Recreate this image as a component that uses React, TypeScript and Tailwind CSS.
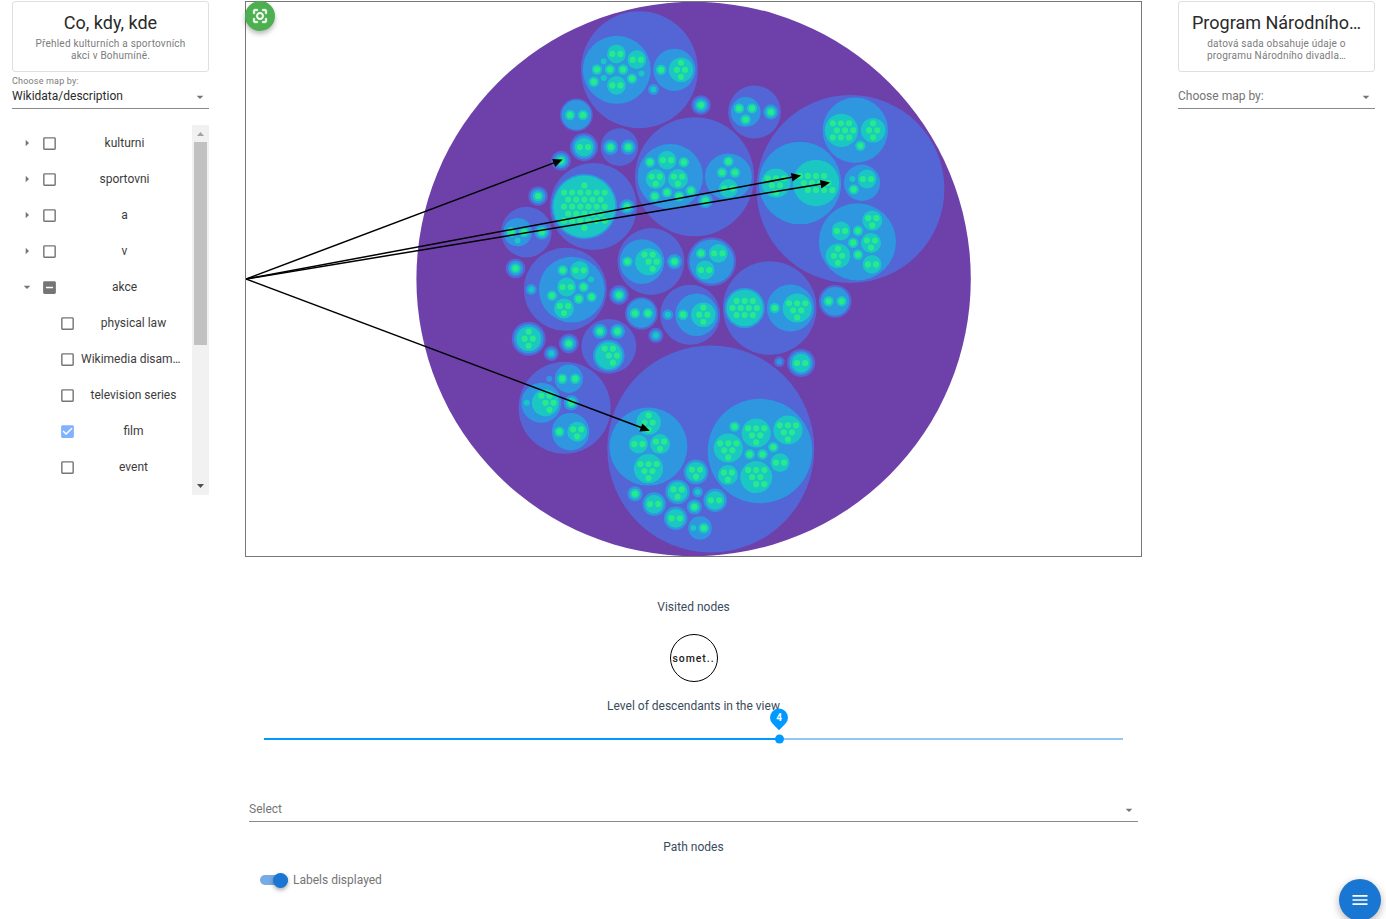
import React from "react";

const COLORS = ["#6e40aa", "#5465d6", "#2f96e0", "#1ac7c2", "#28ea8d"];

type Circle = { level: number; x: number; y: number; r: number };
type Point = [number, number];

const row = (y: number, from: number, count: number): Point[] =>
  Array.from({ length: count }, (_, i) => [from + i * 8.13, y] as Point);

const CLUSTERS: Record<string, { r: number; dots: Point[] }> = {
  n1: { r: 5.2, dots: [[0, 0]] },
  n2: { r: 9.4, dots: row(0, -4.07, 2) },
  n3: { r: 10, dots: [...row(-2.4, -4.07, 2), [0, 4.7]] },
  n4: { r: 12.3, dots: [[0, -7.05], ...row(0, -4.07, 2), [0, 7.05]] },
  n5: { r: 13.5, dots: [...row(-7.05, -4.07, 2), ...row(0, 0, 2), [4.07, 7.05]] },
  n6: { r: 14.6, dots: [...row(-4.7, -8.13, 3), ...row(2.35, -4.07, 2), [0, 9.4]] },
  n7: { r: 16, dots: [...row(-7.05, -8.13, 3), ...row(0, -4.07, 2), ...row(7.05, 0, 2)] },
  n9: { r: 16.6, dots: [...row(-7.05, -8.6, 3), ...row(0, -4.5, 3), ...row(7.05, -8.6, 3)] },
  n10: { r: 18.3, dots: [...row(-7.05, -8.13, 3), ...row(0, -12.2, 4), ...row(7.05, -8.13, 3)] },
  n12: { r: 23.2, dots: [...row(-7.05, -16.27, 4), ...row(0, -12.2, 4), ...row(7.05, -8.13, 4)] },
  n30: {
    r: 31,
    dots: [
      [0, -21.2],
      ...row(-14.1, -20.33, 6),
      ...row(-7.05, -16.27, 5),
      ...row(0, -20.33, 6),
      ...row(7.05, -16.27, 5),
      ...row(14.1, -20.33, 6),
      [0, 21.2],
    ],
  },
};

// [level, x, y, r]
const GROUPS: [number, number, number, number][] = [
  [0, 693.6, 279, 277.2],
  [1, 639.4, 69.8, 58.5], [2, 616.8, 69.8, 34], [2, 674.4, 69.8, 21.1], [2, 653.4, 89.4, 5.4],
  [1, 576.4, 115, 16.4], [2, 576.4, 115, 14.9], [1, 619.5, 147.1, 18.8],
  [1, 694.5, 176.7, 59.5], [2, 670.3, 176.6, 32.7], [2, 728.4, 176.8, 23.4],
  [1, 593.4, 206.6, 43.5], [2, 584.4, 206.6, 32.7],
  [1, 526.4, 232.1, 25.3], [2, 517.7, 232.1, 14.2],
  [1, 565.3, 289.3, 41.5], [2, 571.8, 289.6, 32.9], [2, 531.3, 289.4, 5.4],
  [1, 651, 261.5, 33.4], [2, 642, 261.6, 22.3],
  [1, 711.7, 261.6, 24.4], [2, 711.7, 261.6, 22.2],
  [1, 641.4, 313.3, 16.4], [2, 641.4, 313.3, 14.5],
  [1, 690.2, 314.7, 30], [2, 696.6, 314.7, 21.3], [2, 667.8, 314.7, 5.4],
  [1, 655.8, 335.4, 7.6], [2, 655.8, 335.4, 5.4],
  [1, 769.7, 308, 46.8], [2, 744.7, 308, 20.2], [2, 790.5, 308, 23.6],
  [1, 835.1, 301.3, 16.4], [2, 835.1, 301.3, 14.3],
  [1, 779.3, 361.7, 5.4], [2, 779.3, 361.7, 3],
  [1, 528.7, 338.7, 17], [2, 528.7, 338.7, 14.8],
  [1, 551.3, 353.4, 7.6], [2, 551.3, 353.4, 5.4],
  [1, 608.8, 346.3, 27.4], [2, 608.8, 355.6, 15.8],
  [1, 564.6, 407.8, 46], [2, 549.3, 378.7, 3], [2, 568.8, 378.7, 14.2], [2, 541.3, 402.8, 20], [2, 570.6, 431.7, 18.8],
  [1, 710.8, 449, 103.5], [2, 648.4, 446.6, 39], [2, 760, 451, 52.3],
  [2, 697.7, 492, 5.4], [2, 700, 528, 11.8],
  [1, 754.5, 112, 26.4], [2, 745.7, 112, 15],
  [1, 850.4, 189, 94], [2, 800, 183, 41.3], [2, 855.3, 130.3, 32.7], [2, 862, 182.8, 18.2], [2, 857.4, 241.8, 38.6],
];

// Level 3 nodes without children
const TEAL_LEAVES: Point[] = [
  [603.7, 61.2], [603.7, 78], [641.4, 73.4], [653.4, 89.4], [517.6, 240.4], [591, 279.4], [531.3, 289.4],
  [667.8, 314.7], [655.8, 335.4], [551.3, 353.4], [526.7, 402.7], [697.7, 492], [693.4, 528], [852.4, 179],
];

// [cluster, x, y, outermost level drawn around the cluster]
const NODES: [string, number, number, number][] = [
  ["n2", 616.4, 53.9, 3], ["n2", 636.8, 59.7, 3], ["n2", 616.4, 85.4, 3],
  ["n1", 596.9, 69.5, 3], ["n1", 610, 69.5, 3], ["n1", 623, 69.5, 3], ["n1", 593.8, 81.8, 3], ["n1", 632, 78.6, 3],
  ["n1", 661, 69.8, 3], ["n4", 681, 69.8, 3],
  ["n1", 701, 105.1, 1], ["n1", 570, 115, 3], ["n1", 583, 115, 3], ["n2", 584, 147.1, 1],
  ["n1", 610.6, 147.1, 2], ["n1", 628.3, 147.1, 2], ["n1", 561, 160.7, 1],
  ["n2", 667, 160.2, 3], ["n3", 655.7, 179, 3], ["n3", 678, 179, 3],
  ["n1", 650, 162.2, 3], ["n1", 683.8, 162.2, 3], ["n1", 654.7, 196.2, 3], ["n1", 667, 192.4, 3], ["n1", 679.1, 196.2, 3], ["n1", 690.8, 190.7, 3],
  ["n1", 728.4, 161.4, 3], ["n1", 722, 172.5, 3], ["n1", 735, 172.5, 3], ["n2", 728.4, 188.4, 3],
  ["n1", 705.4, 200.7, 2], ["n30", 584.4, 206.6, 3], ["n1", 627, 206.7, 2], ["n1", 538.1, 196.1, 1],
  ["n1", 511.2, 232, 3], ["n1", 524.1, 232, 3], ["n1", 541.9, 232, 2], ["n1", 515.5, 268.4, 1],
  ["n2", 579.6, 270.3, 3], ["n2", 566.6, 287, 3], ["n3", 564, 308.4, 3],
  ["n1", 562.7, 270.3, 3], ["n1", 583.6, 287, 3], ["n1", 552, 295.6, 3], ["n1", 578.7, 298.8, 3], ["n1", 591.6, 296.9, 3],
  ["n1", 627.4, 261.6, 3], ["n5", 648.6, 261.7, 3], ["n1", 674.4, 261.6, 2],
  ["n1", 701, 253.4, 3], ["n2", 718.3, 253.4, 3], ["n2", 705.1, 270, 3], ["n1", 619, 295, 1],
  ["n1", 634.9, 313.3, 3], ["n1", 647.9, 313.3, 3], ["n1", 683.1, 314.7, 3], ["n4", 703.3, 314.7, 3],
  ["n10", 744.7, 308, 3], ["n1", 774.7, 308, 3], ["n6", 797.2, 308, 3],
  ["n1", 828.6, 301.3, 3], ["n1", 841.6, 301.3, 3], ["n2", 801.1, 363, 1],
  ["n4", 528.7, 338.7, 3], ["n1", 568.8, 343.5, 1], ["n1", 600, 331.3, 2], ["n1", 617.5, 331.3, 2], ["n5", 608.8, 355.6, 3],
  ["n1", 562.2, 378.7, 3], ["n1", 575.2, 378.7, 3], ["n5", 545.4, 402.8, 3], ["n1", 571.3, 402.8, 2],
  ["n1", 559.4, 431.7, 3], ["n3", 577.2, 431.7, 3],
  ["n4", 648.6, 422.5, 3], ["n2", 638.4, 444.2, 3], ["n3", 660.1, 444.1, 3], ["n6", 648.5, 468.7, 3],
  ["n1", 734.5, 426.6, 3], ["n6", 756.2, 433, 3], ["n6", 787.9, 430, 3], ["n6", 728.3, 448, 3],
  ["n1", 749.7, 454.3, 3], ["n1", 762.5, 454.3, 3], ["n1", 773.3, 447.1, 3], ["n2", 780, 462.7, 3], ["n3", 727.9, 475, 3], ["n7", 756.2, 477.1, 3],
  ["n3", 696, 471.9, 2], ["n1", 635, 493.8, 2], ["n3", 677.6, 491.8, 2], ["n2", 654.2, 504.1, 2],
  ["n1", 694.4, 506.8, 2], ["n2", 715.1, 500.3, 2], ["n2", 675.7, 518.3, 2], ["n1", 703.8, 528, 3],
  ["n1", 739.1, 108.4, 3], ["n1", 752, 108.4, 3], ["n1", 745.6, 119.5, 3], ["n1", 770.8, 112, 2],
  ["n6", 776, 183, 3], ["n12", 816, 183, 3], ["n9", 841.4, 130.3, 3], ["n4", 873.1, 130.3, 3], ["n1", 860.4, 145.8, 3],
  ["n2", 867, 179, 3], ["n1", 853.7, 189.4, 3],
  ["n3", 872.3, 220.6, 3], ["n2", 841, 230.9, 3], ["n1", 858, 230.8, 3], ["n1", 853.1, 242.7, 3], ["n3", 871, 242.9, 3],
  ["n4", 838, 255.8, 3], ["n1", 858, 254.7, 3], ["n2", 872, 264.4, 3],
];

const circles: Circle[] = [
  ...GROUPS.map(([level, x, y, r]) => ({ level, x, y, r })),
  ...TEAL_LEAVES.map(([x, y]) => ({ level: 3, x, y, r: 3 })),
  ...NODES.flatMap(([kind, x, y, outer]) => {
    const { r, dots } = CLUSTERS[kind];
    const shells: Circle[] = [];
    for (let level = outer; level <= 3; level++) {
      shells.push({ level, x, y, r: r + (3 - level) * 2.35 });
    }
    return [...shells, ...dots.map(([dx, dy]) => ({ level: 4, x: x + dx, y: y + dy, r: 3.1 }))];
  }),
];

const ARROWS: Point[] = [[562.6, 159.6], [801, 175.6], [830, 182.6], [649.8, 430.8]];

function Arrow({ tip: [x, y] }: { tip: Point }) {
  const angle = (Math.atan2(y - 279, x - 246) * 180) / Math.PI;
  return (
    <g>
      <line x1={246} y1={279} x2={x - 4} y2={y - 4 * Math.tan((angle * Math.PI) / 180)} stroke="#000" strokeWidth={1.5} />
      <path d="M0 0 L-9.5 -4.3 L-9.5 4.3 Z" transform={`translate(${x} ${y}) rotate(${angle})`} />
    </g>
  );
}

function Caret({ right = false, className = "" }: { right?: boolean; className?: string }) {
  return (
    <svg viewBox="0 0 24 24" className={`h-4 w-4 shrink-0 text-[#757575] ${className}`} fill="currentColor">
      <path d={right ? "M10 17l5-5-5-5v10z" : "M7 10l5 5 5-5z"} />
    </svg>
  );
}

const BOX_PATHS = {
  off: "M19 3H5c-1.1 0-2 .9-2 2v14c0 1.1.9 2 2 2h14c1.1 0 2-.9 2-2V5c0-1.1-.9-2-2-2zm0 16H5V5h14v14z",
  some: "M19 3H5c-1.1 0-2 .9-2 2v14c0 1.1.9 2 2 2h14c1.1 0 2-.9 2-2V5c0-1.1-.9-2-2-2zm-2 10H7v-2h10v2z",
  on: "M19 3H5c-1.1 0-2 .9-2 2v14c0 1.1.9 2 2 2h14c1.1 0 2-.9 2-2V5c0-1.1-.9-2-2-2zm-9 14l-5-5 1.41-1.41L10 14.17l7.59-7.59L19 8l-9 9z",
};

type TreeRow = { label: string; state: keyof typeof BOX_PATHS; child?: boolean; open?: boolean };

const TREE: TreeRow[] = [
  { label: "kulturni", state: "off" },
  { label: "sportovni", state: "off" },
  { label: "a", state: "off" },
  { label: "v", state: "off" },
  { label: "akce", state: "some", open: true },
  { label: "physical law", state: "off", child: true },
  { label: "Wikimedia disam…", state: "off", child: true },
  { label: "television series", state: "off", child: true },
  { label: "film", state: "on", child: true },
  { label: "event", state: "off", child: true },
];

function TreeItem({ label, state, child, open }: TreeRow) {
  const clipped = label.endsWith("…");
  return (
    <div className={`flex h-9 items-center pr-[6px] ${child ? "pl-[47px]" : "pl-[7px]"}`}>
      {!child && <Caret right={!open} />}
      <svg
        viewBox="0 0 24 24"
        className={`mt-px h-[17px] w-[17px] shrink-0 ${child ? "" : "ml-[6px]"} ${state === "on" ? "text-[#82b1ff]" : "text-[#757575]"}`}
        fill="currentColor"
      >
        <path d={BOX_PATHS[state]} />
      </svg>
      <span className={`ml-[5px] min-w-0 flex-1 whitespace-nowrap text-[12px] text-[#3c3c3c] ${clipped ? "text-left" : "text-center"}`}>
        {label}
      </span>
    </div>
  );
}

function DatasetCard({ title, lines }: { title: string; lines: string[] }) {
  return (
    <div className="h-[71px] rounded-[3px] border border-[#dfdfdf] pt-[9px] text-center">
      <h2 className="text-[18px] leading-6 text-[#2a2a2a]">{title}</h2>
      <div className="mt-[3px] text-[10px] leading-3 tracking-[0.22px] text-[#7c7c7c]">
        {lines.map((line) => (
          <p key={line}>{line}</p>
        ))}
      </div>
    </div>
  );
}

export default function App() {
  return (
    <div
      className="relative h-[919px] w-[1386px] overflow-hidden bg-white text-[#333]"
      style={{ fontFamily: 'Roboto, "Liberation Sans", sans-serif' }}
    >
      <div className="flex items-start pt-px">
        <aside className="ml-3 w-[197px]">
          <DatasetCard title="Co, kdy, kde" lines={["Přehled kulturních a sportovních", "akci v Bohumíně."]} />
          <div className="flex h-[37px] flex-col border-b border-[#8a8a8a] pt-[3px]">
            <span className="text-[9px] leading-3 tracking-[0.18px] text-[#7c7c7c]">Choose map by:</span>
            <div className="flex h-[18px] items-center justify-between text-[12px] text-[#2a2a2a]">
              <span>Wikidata/description</span>
              <Caret className="mr-px mt-px" />
            </div>
          </div>
          <div className="mt-4 flex h-[370px]">
            <div className="w-[180px] overflow-hidden">
              {TREE.map((item) => (
                <TreeItem key={item.label} {...item} />
              ))}
            </div>
            <div className="flex w-[17px] flex-col items-center bg-[#f1f1f1]">
              <div className="flex h-[17px] items-center">
                <svg className="h-1 w-[7px]" viewBox="0 0 7 4"><path d="M0 4L3.5 0L7 4Z" fill="#a3a3a3" /></svg>
              </div>
              <div className="h-[203px] w-[13px] bg-[#c1c1c1]" />
              <div className="mt-auto flex h-[17px] items-center pb-[2px]">
                <svg className="h-1 w-[7px]" viewBox="0 0 7 4"><path d="M0 0L3.5 4L7 0Z" fill="#505050" /></svg>
              </div>
            </div>
          </div>
        </aside>

        <main className="ml-9 flex w-[897px] flex-col">
          <div className="relative h-[556px] border border-[#777]">
            <svg viewBox="246 2 895 554" className="h-[554px] w-[895px]">
              {circles.map((c, i) => (
                <circle key={i} cx={c.x} cy={c.y} r={c.r} fill={COLORS[c.level]} />
              ))}
              {ARROWS.map((tip) => (
                <Arrow key={tip[0]} tip={tip} />
              ))}
            </svg>
            <button className="absolute -left-px -top-px flex h-[30px] w-[30px] items-center justify-center rounded-full bg-[#4caf50] text-white shadow-[0_3px_5px_rgba(0,0,0,0.28)]">
              <svg viewBox="0 0 24 24" className="h-[18px] w-[18px]" fill="currentColor" stroke="currentColor" strokeWidth={0.7}>
                <path d="M5 15H3v4c0 1.1.9 2 2 2h4v-2H5v-4zM5 5h4V3H5c-1.1 0-2 .9-2 2v4h2V5zm14-2h-4v2h4v4h2V5c0-1.1-.9-2-2-2zm0 16h-4v2h4c1.1 0 2-.9 2-2v-4h-2v4zM12 7c-2.76 0-5 2.24-5 5s2.24 5 5 5 5-2.24 5-5-2.24-5-5-5zm0 8c-1.66 0-3-1.34-3-3s1.34-3 3-3 3 1.34 3 3-1.34 3-3 3z" />
              </svg>
            </button>
          </div>

          <div className="flex flex-col items-center text-[12px] text-[#3b4b5c]">
            <p className="mt-[41px] leading-[18px]">Visited nodes</p>
            <div className="mt-[18px] flex h-12 w-12 items-center justify-center rounded-full border border-black pt-px text-[10.5px] font-medium tracking-[0.95px] text-[#222]">
              <span>somet..</span>
            </div>
            <p className="mt-[15px] leading-[18px]">Level of descendants in the view</p>
          </div>

          <div className="relative mx-[19px] mt-[23px] flex h-[2px]">
            <div className="w-[515px] bg-[#0099ff]" />
            <div className="flex-1 bg-[#90c8f4]" />
            <div className="absolute -top-[4px] left-[511px] h-[9px] w-[9px] translate-y-[0.5px] rounded-full bg-[#0099ff]" />
            <div className="absolute -top-[30px] left-[506px] h-[18px] w-[18px] translate-y-[0.5px] rotate-45 rounded-full rounded-br-none bg-[#0099ff]" />
            <span className="absolute -top-[29px] left-[506px] w-[18px] text-center text-[10px] font-bold leading-[18px] text-white">4</span>
          </div>

          <div className="mx-1 mt-[60px] flex h-[22px] items-start justify-between border-b border-[#8a8a8a] text-[12px] leading-[18px] text-[#757575]">
            <span>Select</span>
            <Caret className="mr-px mt-[2px]" />
          </div>
          <p className="mt-4 text-center text-[12px] leading-[18px] text-[#3b4b5c]">Path nodes</p>
          <div className="ml-[15px] mt-[14px] flex h-[20px] items-center text-[12px] text-[#757575]">
            <div className="relative mr-[5px] h-[10px] w-7 rounded-full bg-[#77abe4]">
              <div className="absolute -top-[2px] right-0 h-[15px] w-[15px] rounded-full bg-[#1976d2] shadow-[0_2px_4px_rgba(0,0,0,0.35)]" />
            </div>
            Labels displayed
          </div>
        </main>

        <aside className="ml-9 w-[197px]">
          <DatasetCard title="Program Národního…" lines={["datová sada obsahuje údaje o", "programu Národního divadla…"]} />
          <div className="flex h-[37px] items-start justify-between border-b border-[#8a8a8a] pt-[15px] text-[12px] leading-[18px] text-[#757575]">
            <span>Choose map by:</span>
            <Caret className="mr-px mt-[1.5px]" />
          </div>
        </aside>
      </div>

      <button className="absolute left-[1339px] top-[879px] flex h-[42px] w-[42px] items-center justify-center rounded-full bg-[#1976d2] text-white shadow-[0_3px_8px_rgba(0,0,0,0.3)]">
        <svg viewBox="0 0 24 24" className="h-5 w-5" fill="currentColor">
          <path d="M3 18h18v-2H3v2zm0-5h18v-2H3v2zm0-7v2h18V6H3z" />
        </svg>
      </button>
    </div>
  );
}
